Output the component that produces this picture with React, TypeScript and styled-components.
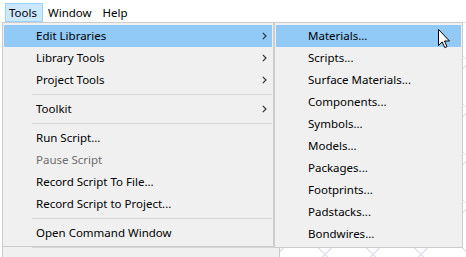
import * as React from 'react';
import styled, { createGlobalStyle } from 'styled-components';

const GlobalStyle = createGlobalStyle`
  html, body {
    margin: 0;
    padding: 0;
    background: #ffffff;
  }
  body {
    font-family: "Segoe UI", "Noto Sans", "Open Sans", sans-serif;
    font-size: 11.5px;
  }
`;

const Root = styled.div`
  position: relative;
  width: 466px;
  height: 257px;
  overflow: hidden;
  display: flex;
  flex-direction: column;
  background: #ffffff;
`;

const MenuBar = styled.div`
  height: 22px;
  flex: none;
  display: flex;
  align-items: flex-start;
  gap: 1px;
  padding: 3px 0 0 5px;
  box-sizing: border-box;
  background: #ffffff;
`;

const MenuBarItem = styled.div<{ $active?: boolean }>`
  height: 19px;
  box-sizing: border-box;
  display: flex;
  align-items: center;
  padding: 0 5px 0 3px;
  border: 1px solid ${(p) => (p.$active ? '#99d1ff' : 'transparent')};
  background: ${(p) => (p.$active ? '#cce8ff' : 'transparent')};
  color: #000000;
  line-height: 1;
`;

const Workspace = styled.div`
  flex: 1;
  display: flex;
  border-top: 1px solid #e3e3e3;
`;

const SidePanel = styled.div`
  position: relative;
  width: 276px;
  margin-left: 2px;
  background: #f0f0f0;
  border-left: 1px solid #c9c9c9;
  border-right: 1px solid #c9c9c9;

  &::after {
    content: '';
    position: absolute;
    left: 29px;
    right: 0;
    top: 224px;
    height: 1px;
    background: #d5d5d5;
  }
`;

const Canvas = styled.div`
  flex: 1;
  background-color: #ffffff;
  background-image:
    repeating-linear-gradient(45deg, transparent 0 33px, #e2e2f2 33px 34px),
    repeating-linear-gradient(-45deg, transparent 0 33px, #e2e2f2 33px 34px);
`;

const Menu = styled.div<{ $left: number; $width: number }>`
  position: absolute;
  top: 22px;
  left: ${(p) => p.$left}px;
  width: ${(p) => p.$width}px;
  box-sizing: border-box;
  padding: 2px 1px;
  background: #f0f0f0;
  border: 1px solid #cccccc;
  display: flex;
  flex-direction: column;
`;

const Item = styled.div<{ $active?: boolean; $disabled?: boolean }>`
  height: 22px;
  box-sizing: border-box;
  display: flex;
  align-items: center;
  padding: 0 5px 2px 32px;
  background: ${(p) => (p.$active ? '#91c9f7' : 'transparent')};
  color: ${(p) => (p.$disabled ? '#6d6d6d' : '#000000')};
  white-space: nowrap;
`;

const Separator = styled.div`
  height: 7px;
  display: flex;
  align-items: center;
  padding-left: 28px;

  &::before {
    content: '';
    flex: 1;
    height: 1px;
    background: #d7d7d7;
  }
`;

const ChevronIcon = styled.svg`
  margin-left: auto;
  margin-top: 2px;
  flex: none;
`;

const Cursor = styled.svg`
  position: absolute;
  left: 437px;
  top: 28px;
`;

function Chevron() {
  return (
    <ChevronIcon width="5" height="8" viewBox="0 0 5 8">
      <path d="M0.8 0.8 L4 4 L0.8 7.2" fill="none" stroke="#333333" strokeWidth="1.2" />
    </ChevronIcon>
  );
}

const mainItems: Array<{ label?: string; sub?: boolean; active?: boolean; disabled?: boolean }> = [
  { label: 'Edit Libraries', sub: true, active: true },
  { label: 'Library Tools', sub: true },
  { label: 'Project Tools', sub: true },
  {},
  { label: 'Toolkit', sub: true },
  {},
  { label: 'Run Script...' },
  { label: 'Pause Script', disabled: true },
  { label: 'Record Script To File...' },
  { label: 'Record Script to Project...' },
  {},
  { label: 'Open Command Window' },
];

const libraryItems = [
  'Materials...',
  'Scripts...',
  'Surface Materials...',
  'Components...',
  'Symbols...',
  'Models...',
  'Packages...',
  'Footprints...',
  'Padstacks...',
  'Bondwires...',
];

export default function App() {
  return (
    <>
      <GlobalStyle />
      <Root>
        <MenuBar>
          <MenuBarItem $active>Tools</MenuBarItem>
          <MenuBarItem>Window</MenuBarItem>
          <MenuBarItem>Help</MenuBarItem>
        </MenuBar>
        <Workspace>
          <SidePanel />
          <Canvas />
        </Workspace>

        <Menu $left={2} $width={272}>
          {mainItems.map((item, i) =>
            item.label ? (
              <Item key={i} $active={item.active} $disabled={item.disabled}>
                {item.label}
                {item.sub && <Chevron />}
              </Item>
            ) : (
              <Separator key={i} />
            )
          )}
        </Menu>

        <Menu $left={274} $width={189}>
          {libraryItems.map((label, i) => (
            <Item key={label} $active={i === 0}>
              {label}
            </Item>
          ))}
        </Menu>

        <Cursor width="13" height="21" viewBox="0 0 13 21">
          <path
            d="M1.5 1.5 V17.5 L5.2 13.9 L7.8 19.6 L10 18.6 L7.5 13 H12.5 Z"
            fill="#ffffff"
            stroke="#000000"
            strokeWidth="1"
            strokeLinejoin="miter"
          />
        </Cursor>
      </Root>
    </>
  );
}
